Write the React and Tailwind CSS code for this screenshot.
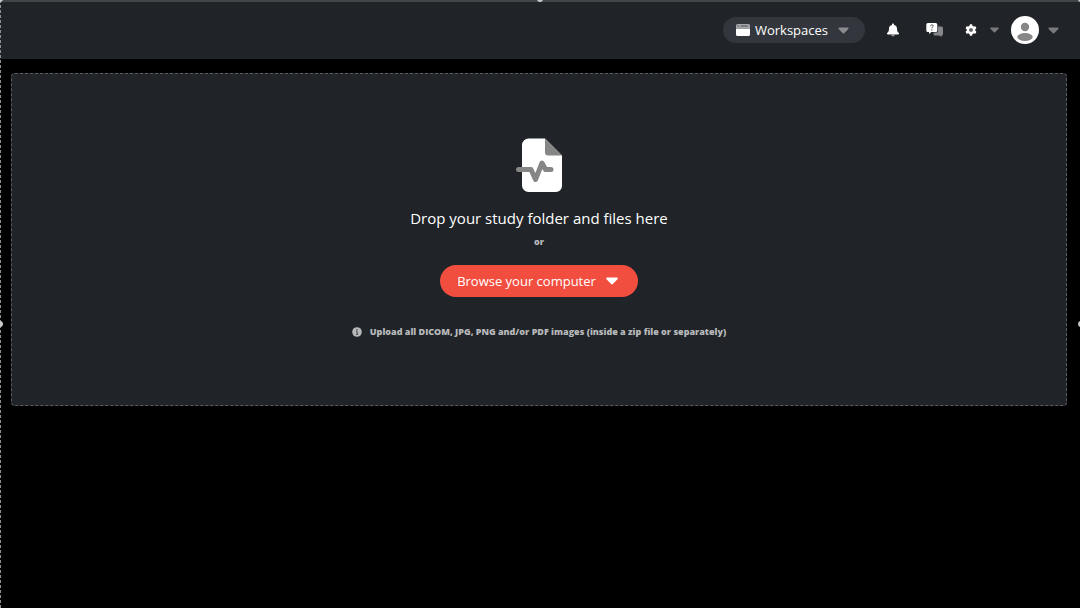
import React from 'react';

function Caret({ className }) {
  return (
    <svg viewBox="0 0 12 8" className={className} fill="currentColor" aria-hidden="true">
      <path d="M1.2 0.5h9.6c.9 0 1.3 1 .7 1.7L6.8 7.1c-.4.5-1.2.5-1.6 0L.5 2.2C-.1 1.500.3.5 1.2.5z" />
    </svg>
  );
}

function WorkspaceIcon() {
  return (
    <svg viewBox="0 0 14 12" className="w-[14px] h-3" aria-hidden="true">
      <path d="M1.5 0h11A1.5 1.5 0 0 1 14 1.5V4H0V1.5A1.5 1.5 0 0 1 1.5 0z" fill="#a5a7aa" />
      <path d="M1.5 2h1.5M4.5 2h7.5" stroke="#4b4e53" strokeWidth="1" />
      <path d="M0 4.6h14v5.9A1.5 1.5 0 0 1 12.5 12h-11A1.5 1.5 0 0 1 0 10.5z" fill="#fff" />
    </svg>
  );
}

function BellIcon() {
  return (
    <svg viewBox="0 0 12 14" className="w-3 h-[14px]" aria-hidden="true">
      <path d="M4.3 11.8h3.4a1.7 1.7 0 0 1-3.4 0z" fill="#97999b" />
      <path d="M6 .5c.6 0 1 .4 1 1V2c1.9.4 3 1.7 3 3.7 0 2.1.5 3 1.6 4 .8.7.4 1.800-.5 1.800H.9c-.9 0-1.300-1.100-.5-1.800C1.500 8.700 2 7.800 2 5.700c0-2 1.100-3.300 3-3.700v-.5c0-.6.4-1 1-1z" fill="#fff" />
    </svg>
  );
}

function ChatIcon() {
  return (
    <svg viewBox="0 0 18 14" className="w-[18px] h-[14px]" aria-hidden="true">
      <path d="M12 3.5h3.500A1.500 1.500 0 0 1 17 5v6a1.500 1.500 0 0 1-1.500 1.500V14l-2.400-1.500H9A1.500 1.500 0 0 1 7.500 11V9.500H10.500A1.500 1.500 0 0 0 12 8z" fill="#85878a" />
      <path d="M1.800 0h8A1.500 1.500 0 0 1 11.300 1.500v6A1.500 1.500 0 0 1 9.800 9H5.500L3 11V9H1.800A1.500 1.500 0 0 1 .3 7.500v-6A1.500 1.500 0 0 1 1.800 0z" fill="#fff" />
      <path d="M4.500 3.100C4.700 1.400 7.300 1.500 7.200 3.100 7.100 4.200 5.900 4 5.900 5.300" fill="none" stroke="#4c4f53" strokeWidth="1" />
      <circle cx="5.900" cy="6.900" r=".65" fill="#4c4f53" />
    </svg>
  );
}

function GearIcon() {
  return (
    <svg viewBox="0 0 12 12" className="w-3 h-3" aria-hidden="true">
      <g fill="#fff">
        <circle cx="6" cy="6" r="4.4" />
        <rect x="4.7" y=".3" width="2.6" height="11.4" rx=".7" />
        <rect x="4.7" y=".3" width="2.6" height="11.4" rx=".7" transform="rotate(60 6 6)" />
        <rect x="4.7" y=".3" width="2.6" height="11.4" rx=".7" transform="rotate(120 6 6)" />
      </g>
      <circle cx="6" cy="6" r="2.1" fill="#77797c" />
      <circle cx="6" cy="6" r="1" fill="#55585c" />
    </svg>
  );
}

function AvatarIcon() {
  return (
    <svg viewBox="0 0 28 28" className="w-7 h-7" aria-hidden="true">
      <circle cx="14" cy="14" r="14" fill="#fff" />
      <circle cx="14" cy="11" r="4.2" fill="#868686" />
      <ellipse cx="14" cy="21" rx="7.7" ry="4" fill="#868686" />
    </svg>
  );
}

function StudyFileIcon() {
  return (
    <svg viewBox="0 0 46 54" className="w-[46px] h-[54px]" aria-hidden="true">
      <path d="M12.500.5H29L46 17.500V48a6 6 0 0 1-6 6H12.500A6.500 6.500 0 0 1 6 47.500V7A6.500 6.500 0 0 1 12.500.5z" fill="#fff" />
      <path d="M29 .5l17 17H32a3 3 0 0 1-3-3z" fill="#868686" />
      <path d="M2.500 31.500h12.500l4.500 10L26 25l3.500 6.500H35" fill="none" stroke="#868686" strokeWidth="5" strokeLinecap="round" strokeLinejoin="round" />
    </svg>
  );
}

function InfoIcon() {
  return (
    <svg viewBox="0 0 10 10" className="w-[10px] h-[10px]" aria-hidden="true">
      <circle cx="5" cy="5" r="4.8" fill="#b7b9bb" />
      <circle cx="5" cy="2.7" r=".8" fill="#4b4e52" />
      <path d="M4 4.5h1.2v2.7M3.9 7.3h2.3" fill="none" stroke="#4b4e52" strokeWidth="1" />
    </svg>
  );
}

function Header() {
  return (
    <header className="flex items-center justify-end h-[59px] pr-[21px] pb-px bg-[#202327] border-t-2 border-[#434447]">
      <button type="button" className="flex items-center h-[26px] pl-[13px] pr-4 mr-[22px] rounded-full bg-[#33373d] text-[13px] leading-5 font-medium">
        <WorkspaceIcon />
        <span className="ml-[5px] mr-[10px]">Workspaces</span>
        <Caret className="w-[11px] h-[7px] text-[#8a8c90]" />
      </button>
      <button type="button" aria-label="Notifications" className="mr-[27px]">
        <BellIcon />
      </button>
      <button type="button" aria-label="Help" className="mr-[21px]">
        <ChatIcon />
      </button>
      <button type="button" aria-label="Settings" className="flex items-center gap-[13px] mr-3">
        <GearIcon />
        <Caret className="w-[9px] h-[6px] text-[#77797c]" />
      </button>
      <button type="button" aria-label="Account" className="flex items-center gap-[9px]">
        <AvatarIcon />
        <Caret className="w-[11px] h-[7px] text-[#77797c]" />
      </button>
    </header>
  );
}

function DropZone() {
  return (
    <section className="flex flex-col items-center mt-[14px] ml-[11px] mr-[13px] pt-16 pb-[66px] rounded-[4px] border border-dashed border-[#5b5d60] bg-[#202327]">
      {/* the pulse sticks out left of the page shape */}
      <StudyFileIcon />
      <h1 className="mt-[14px] text-[15px] leading-6 font-medium">Drop your study folder and files here</h1>
      <p className="mt-[5px] text-[9px] leading-[14px] font-extrabold text-[#b7b9bb]">or</p>
      <button type="button" className="flex items-center h-8 mt-4 px-[17px] rounded-full bg-[#f24e40] text-[13px] leading-5 font-medium">
        Browse your computer
        <Caret className="w-3 h-2 ml-[10px] mr-[3px]" />
      </button>
      <p className="flex items-center gap-2 mt-7 text-[9px] leading-[14px] font-extrabold text-[#b7b9bb]">
        <InfoIcon />
        Upload all DICOM, JPG, PNG and/or PDF images (inside a zip file or separately)
      </p>
    </section>
  );
}

// dashed outline with round grips around the whole workspace
function SelectionFrame() {
  return (
    <div className="absolute inset-0 pointer-events-none border-l border-dashed border-[#8f9194]">
      <span className="absolute -left-1 -top-1 w-[6px] h-[6px] rounded-full bg-[#c6c8ca]" />
      <span className="absolute left-1/2 -top-1 w-[6px] h-[6px] -ml-1 rounded-full bg-[#c6c8ca]" />
      <span className="absolute -right-1 -top-1 w-[6px] h-[6px] rounded-full bg-[#c6c8ca]" />
      <span className="absolute -left-1 top-[321px] w-[6px] h-[6px] rounded-full bg-[#c6c8ca]" />
      <span className="absolute -right-1 top-[321px] w-[6px] h-[6px] rounded-full bg-[#c6c8ca]" />
    </div>
  );
}

function App() {
  return (
    <div className="relative min-h-screen overflow-hidden bg-black text-white font-['Open_Sans',sans-serif]">
      <Header />
      <main>
        <DropZone />
      </main>
      <SelectionFrame />
    </div>
  );
}

export default App;
